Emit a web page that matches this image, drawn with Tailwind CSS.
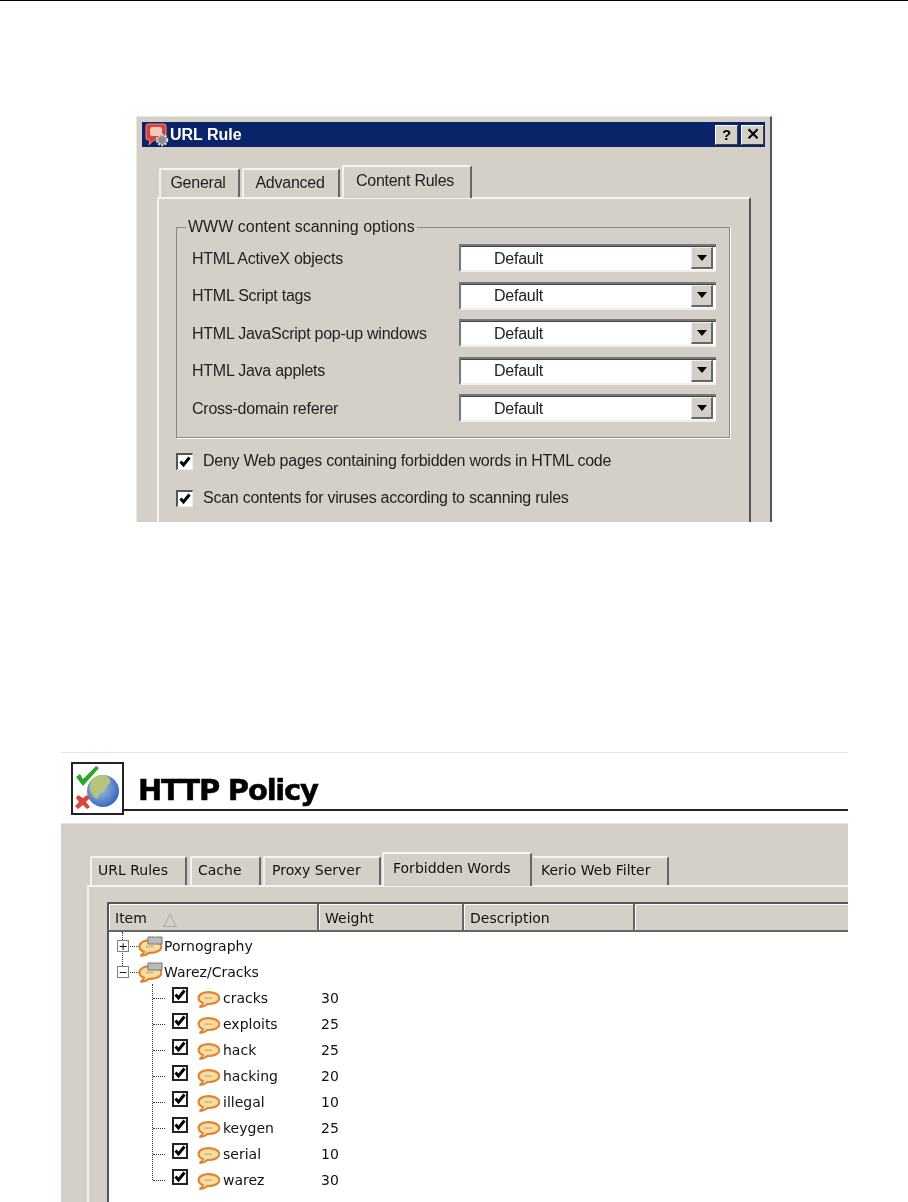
<!DOCTYPE html>
<html lang="en">
<head>
    <meta charset="UTF-8">
    <meta name="viewport" content="width=device-width, initial-scale=1.0">
    <title>URL Rule / HTTP Policy</title>
    <script src="https://cdn.jsdelivr.net/npm/@tailwindcss/browser@4"></script>
</head>
<body class="bg-white text-[#111] font-['Liberation_Sans',sans-serif]">
    <!-- shared icons -->
    <svg class="hidden">
        <symbol id="bubble" viewBox="0 0 24 18">
            <path d="M12 1.200C6 1.200 1.500 3.700 1.500 7.500c0 2.500 1.800 4.300 4.500 5.300-.3 1.500-1.500 3-3.500 4 3.500 0 6.500-1.200 8.500-3 7 .3 12.500-2.500 12.500-6.300C23.500 3.700 18 1.200 12 1.200z" fill="#f8dca2" stroke="#e0852f" stroke-width="2.200"/>
            <path d="M8 7.500h8" stroke="#b9a77a" stroke-width="2" stroke-dasharray="1.500 1"/>
        </symbol>
        <symbol id="check" viewBox="2 2 12 12">
            <path d="M3.500 7.500l3 3.500 6-7.500" fill="none" stroke="#000" stroke-width="3"/>
        </symbol>
        <symbol id="arrow" viewBox="0 0 10 6">
            <path d="M0 0h10L5 6z" fill="#000"/>
        </symbol>
    </svg>

    <div class="h-[1202px] w-[908px] overflow-hidden">
        <div class="h-px bg-black"></div>

        <!-- URL Rule dialog -->
        <div class="mt-[115px] ml-[136px] h-[406px] w-[636px] overflow-hidden border-t border-l border-r-2 border-t-[#ece9e2] border-l-[#ece9e2] border-r-[#555] bg-[#d4d0c8] text-[16px] tracking-[-0.25px] text-[#222] blur-[0.35px]">
            <div class="mx-[5px] mt-[5px] flex h-[25px] items-center bg-[#0a246a] pr-[1px] pl-[3px]">
                <svg class="h-[24px] w-[24px]" viewBox="0 0 24 24">
                    <path d="M3 1h16a2 2 0 0 1 2 2v12a2 2 0 0 1-2 2H9l-5 5 1-5H3a2 2 0 0 1-2-2V3a2 2 0 0 1 2-2z" fill="#d8423a" stroke="#f08a7c"/>
                    <rect x="5" y="4" width="12" height="9" rx="2" fill="#f6c9be"/>
                    <circle cx="17" cy="17" r="5" fill="#8d8d8d" stroke="#d8d8d8" stroke-width="2.500" stroke-dasharray="2 1.200"/>
                </svg>
                <span class="ml-[1px] text-[16px] font-bold tracking-normal text-white">URL Rule</span>
                <div class="ml-auto flex gap-[3px]">
                    <div class="flex h-[20px] w-[23px] items-center justify-center border border-t-white border-l-white border-r-[#404040] border-b-[#404040] bg-[#d4d0c8] text-[15px] leading-none font-bold text-black">?</div>
                    <div class="flex h-[20px] w-[23px] items-center justify-center border border-t-white border-l-white border-r-[#404040] border-b-[#404040] bg-[#d4d0c8] text-[17px] leading-none text-black [-webkit-text-stroke:0.4px_black]">✕</div>
                </div>
            </div>

            <div class="mt-[18px] ml-[20px] w-[594px]">
                <div class="relative z-10 flex items-end gap-[2px] pl-[2px]">
                    <div class="flex h-[29px] w-[81px] items-center justify-center rounded-t-[2px] border-t-2 border-l-2 border-r-2 border-t-[#f4f2ee] border-l-[#f4f2ee] border-r-[#666] pr-[3px] pb-[1px]">General</div>
                    <div class="flex h-[29px] w-[98px] items-center justify-center rounded-t-[2px] border-t-2 border-l-2 border-r-2 border-t-[#f4f2ee] border-l-[#f4f2ee] border-r-[#666] pr-[2px] pb-[1px]">Advanced</div>
                    <div class="-mb-px flex h-[33px] w-[130px] items-center justify-center rounded-t-[2px] border-t-2 border-l-2 border-r-2 border-t-[#f4f2ee] border-l-[#f4f2ee] border-r-[#666] bg-[#d4d0c8] pr-[4px] pb-[3px]">Content Rules</div>
                </div>
                <div class="h-[330px] border-t-2 border-l-2 border-r-2 border-t-[#f4f2ee] border-l-[#f4f2ee] border-r-[#555] pt-[28px] pl-[17px]">
                    <div class="relative h-[211px] w-[554px] border border-[#8a8880] pt-[16px] pl-[15px] shadow-[1px_1px_0_#fff]">
                        <span class="absolute -top-[11px] left-[9px] bg-[#d4d0c8] px-[2px] leading-[20px] tracking-normal">WWW content scanning options</span>
                        <div class="flex flex-col gap-[9.500px]">
                            <div class="flex h-[28px] items-center">
                                <span class="w-[267px] pt-[1px]">HTML ActiveX objects</span>
                                <div class="flex h-[28px] w-[257px] items-center border-t-2 border-l-2 border-t-[#777] border-l-[#777] border-b-2 border-b-[#f0eee8] bg-white pr-[3px] pl-[33px] shadow-[inset_0_1px_0_#444]">
                                    <span class="pt-[1px]">Default</span>
                                    <div class="ml-auto flex h-[22px] w-[22px] items-center justify-center border-t border-l border-r-2 border-b-2 border-t-[#f0eee8] border-l-[#f0eee8] border-r-[#666] border-b-[#666] bg-[#d4d0c8]"><svg class="h-[6px] w-[10px]"><use href="#arrow"/></svg></div>
                                </div>
                            </div>
                            <div class="flex h-[28px] items-center">
                                <span class="w-[267px] pt-[1px]">HTML Script tags</span>
                                <div class="flex h-[28px] w-[257px] items-center border-t-2 border-l-2 border-t-[#777] border-l-[#777] border-b-2 border-b-[#f0eee8] bg-white pr-[3px] pl-[33px] shadow-[inset_0_1px_0_#444]">
                                    <span class="pt-[1px]">Default</span>
                                    <div class="ml-auto flex h-[22px] w-[22px] items-center justify-center border-t border-l border-r-2 border-b-2 border-t-[#f0eee8] border-l-[#f0eee8] border-r-[#666] border-b-[#666] bg-[#d4d0c8]"><svg class="h-[6px] w-[10px]"><use href="#arrow"/></svg></div>
                                </div>
                            </div>
                            <div class="flex h-[28px] items-center">
                                <span class="w-[267px] pt-[1px]">HTML JavaScript pop-up windows</span>
                                <div class="flex h-[28px] w-[257px] items-center border-t-2 border-l-2 border-t-[#777] border-l-[#777] border-b-2 border-b-[#f0eee8] bg-white pr-[3px] pl-[33px] shadow-[inset_0_1px_0_#444]">
                                    <span class="pt-[1px]">Default</span>
                                    <div class="ml-auto flex h-[22px] w-[22px] items-center justify-center border-t border-l border-r-2 border-b-2 border-t-[#f0eee8] border-l-[#f0eee8] border-r-[#666] border-b-[#666] bg-[#d4d0c8]"><svg class="h-[6px] w-[10px]"><use href="#arrow"/></svg></div>
                                </div>
                            </div>
                            <div class="flex h-[28px] items-center">
                                <span class="w-[267px] pt-[1px]">HTML Java applets</span>
                                <div class="flex h-[28px] w-[257px] items-center border-t-2 border-l-2 border-t-[#777] border-l-[#777] border-b-2 border-b-[#f0eee8] bg-white pr-[3px] pl-[33px] shadow-[inset_0_1px_0_#444]">
                                    <span class="pt-[1px]">Default</span>
                                    <div class="ml-auto flex h-[22px] w-[22px] items-center justify-center border-t border-l border-r-2 border-b-2 border-t-[#f0eee8] border-l-[#f0eee8] border-r-[#666] border-b-[#666] bg-[#d4d0c8]"><svg class="h-[6px] w-[10px]"><use href="#arrow"/></svg></div>
                                </div>
                            </div>
                            <div class="flex h-[28px] items-center">
                                <span class="w-[267px] pt-[1px]">Cross-domain referer</span>
                                <div class="flex h-[28px] w-[257px] items-center border-t-2 border-l-2 border-t-[#777] border-l-[#777] border-b-2 border-b-[#f0eee8] bg-white pr-[3px] pl-[33px] shadow-[inset_0_1px_0_#444]">
                                    <span class="pt-[1px]">Default</span>
                                    <div class="ml-auto flex h-[22px] w-[22px] items-center justify-center border-t border-l border-r-2 border-b-2 border-t-[#f0eee8] border-l-[#f0eee8] border-r-[#666] border-b-[#666] bg-[#d4d0c8]"><svg class="h-[6px] w-[10px]"><use href="#arrow"/></svg></div>
                                </div>
                            </div>
                        </div>
                    </div>
                    <div class="mt-[14px] flex h-[18px] items-center gap-[10px]">
                        <div class="h-[17px] w-[17px] border-t-2 border-l-2 border-t-[#555] border-l-[#555] border-r border-b border-r-[#eee] border-b-[#eee] bg-white p-[1px]"><svg class="h-full w-full"><use href="#check"/></svg></div>
                        <span>Deny Web pages containing forbidden words in HTML code</span>
                    </div>
                    <div class="mt-[19px] flex h-[18px] items-center gap-[10px]">
                        <div class="h-[17px] w-[17px] border-t-2 border-l-2 border-t-[#555] border-l-[#555] border-r border-b border-r-[#eee] border-b-[#eee] bg-white p-[1px]"><svg class="h-full w-full"><use href="#check"/></svg></div>
                        <span>Scan contents for viruses according to scanning rules</span>
                    </div>
                </div>
            </div>
        </div>

        <!-- HTTP Policy -->
        <div class="mt-[230px] ml-[61px] w-[787px] font-['DejaVu_Sans',sans-serif] text-[14px] blur-[0.35px]">
            <div class="flex h-[71px] items-start border-t border-[#e8e4dc] pt-[9px] pl-[10px]">
                <div class="flex h-[53px] w-[53px] shrink-0 items-center justify-center border-2 border-[#222] bg-white">
                    <svg class="h-[48px] w-[48px]" viewBox="0 0 48 48">
                        <defs>
                            <radialGradient id="globe" cx="0.4" cy="0.4" r="0.7">
                                <stop offset="0" stop-color="#a8c8ee"/>
                                <stop offset="1" stop-color="#2a5cb4"/>
                            </radialGradient>
                        </defs>
                        <circle cx="29" cy="26" r="16" fill="url(#globe)"/>
                        <path d="M18 14c4-4 11-5 15-3 3 2 5 6 2 8-3 2-3 7-7 8-3 0-3 5-5 7-3-2-5-4-7-9-1-4 0-8 2-11z" fill="#b5c47a"/>
                        <path d="M2 12l4-3 3 5L22 1l3 2L9 21z" fill="#2aa62a"/>
                        <path d="M4 30l5 3 4-3 3 3-4 4 4 5-3 2-4-4-5 4-3-3 4-4-3-4z" fill="#d8453a"/>
                    </svg>
                </div>
                <div class="mt-[9px] flex h-[40px] flex-1 items-center border-b-2 border-[#222] pl-[14px]">
                    <h1 class="text-[29px] leading-none font-bold tracking-[-1.200px] text-black [-webkit-text-stroke:0.5px_black]">HTTP Policy</h1>
                </div>
            </div>

            <div class="h-[379px] border-t border-[#e8e4dc] bg-[#d4d0c8] pt-[28px]">
                <div class="relative z-10 flex items-end pl-[29px]">
                    <div class="flex h-[29px] w-[97px] items-center rounded-t-[2px] border-t-2 border-l-2 border-r-2 border-t-[#f4f2ee] border-l-[#f4f2ee] border-r-[#666] pb-[2px] pl-[6px]">URL Rules</div>
                    <div class="ml-[3px] flex h-[29px] w-[71px] items-center rounded-t-[2px] border-t-2 border-l-2 border-r-2 border-t-[#f4f2ee] border-l-[#f4f2ee] border-r-[#666] pb-[2px] pl-[6px]">Cache</div>
                    <div class="ml-[2px] flex h-[29px] w-[118px] items-center rounded-t-[2px] border-t-2 border-l-2 border-r-2 border-t-[#f4f2ee] border-l-[#f4f2ee] border-r-[#666] pb-[2px] pl-[7px]">Proxy Server</div>
                    <div class="-mb-px ml-px flex h-[34px] w-[150px] items-center rounded-t-[2px] border-t-2 border-l-2 border-r-2 border-t-[#f4f2ee] border-l-[#f4f2ee] border-r-[#666] bg-[#d4d0c8] pb-[3px] pl-[9px]">Forbidden Words</div>
                    <div class="flex h-[29px] w-[137px] items-center rounded-t-[2px] border-t-2 border-r-2 border-t-[#f4f2ee] border-r-[#666] pb-[2px] pl-[9px]">Kerio Web Filter</div>
                </div>
                <div class="ml-[26px] h-[320px] border-t-2 border-l-2 border-t-[#f4f2ee] border-l-[#f4f2ee] pt-[15px] pl-[18px]">
                    <div class="h-[310px] border-t-2 border-l-2 border-t-[#555] border-l-[#555] bg-white">
                        <div class="flex h-[28px] border-b-2 border-[#666] bg-[#d4d0c8]">
                            <div class="flex w-[210px] items-center border-r-2 border-r-[#666] pt-[3px] pl-[6px] shadow-[inset_1px_1px_0_#fff]">Item<span class="ml-[16px] text-[18px] leading-none text-[#aaa]">△</span></div>
                            <div class="flex w-[145px] items-center border-r-2 border-r-[#666] pt-[3px] pl-[6px] shadow-[inset_1px_1px_0_#fff]">Weight</div>
                            <div class="flex w-[171px] items-center border-r-2 border-r-[#666] pt-[3px] pl-[6px] shadow-[inset_1px_1px_0_#fff]">Description</div>
                            <div class="flex-1 shadow-[inset_1px_1px_0_#fff]"></div>
                        </div>

                        <div class="relative pt-[1px]">
                            <!-- tree connector lines -->
                            <div class="absolute top-0 left-[13px] h-[38px] border-l border-dotted border-[#333]"></div>
                            <div class="absolute top-[52px] left-[43px] h-[196px] border-l border-dotted border-[#333]"></div>

                            <div class="relative flex h-[26px] items-center pl-[8px]">
                                <div class="flex h-[12px] w-[12px] items-center justify-center border border-[#808080] bg-white text-[11px] leading-none text-black">+</div>
                                <div class="ml-[1px] w-[9px] border-t border-dotted border-[#333]"></div>
                                <svg class="-ml-[1px] h-[21px] w-[25px]" viewBox="0 0 25 21"><use href="#bubble" y="3" width="24" height="18"/><path d="M10 1h6l1 .600 1-.600h6v7H10z" fill="#bbb" stroke="#777"/></svg>
                                <span class="ml-[1px]">Pornography</span>
                            </div>
                            <div class="relative flex h-[26px] items-center pl-[8px]">
                                <div class="flex h-[12px] w-[12px] items-center justify-center border border-[#808080] bg-white text-[11px] leading-none text-black">−</div>
                                <div class="ml-[1px] w-[9px] border-t border-dotted border-[#333]"></div>
                                <svg class="-ml-[1px] h-[21px] w-[25px]" viewBox="0 0 25 21"><use href="#bubble" y="3" width="24" height="18"/><path d="M10 1h6l1 .600 1-.600h6v7H10z" fill="#bbb" stroke="#777"/></svg>
                                <span class="ml-[1px]">Warez/Cracks</span>
                            </div>

                            <div class="relative flex h-[26px] items-center pl-[44px]">
                                <div class="w-[12px] border-t border-dotted border-[#333]"></div>
                                <div class="mb-[6px] ml-[7px] h-[16px] w-[16px] border-2 border-[#222] bg-white"><svg class="h-full w-full"><use href="#check"/></svg></div>
                                <svg class="mt-[3px] ml-[9px] h-[17px] w-[23px]"><use href="#bubble"/></svg>
                                <span class="ml-[3px] w-[98px]">cracks</span>
                                <span>30</span>
                            </div>
                            <div class="relative flex h-[26px] items-center pl-[44px]">
                                <div class="w-[12px] border-t border-dotted border-[#333]"></div>
                                <div class="mb-[6px] ml-[7px] h-[16px] w-[16px] border-2 border-[#222] bg-white"><svg class="h-full w-full"><use href="#check"/></svg></div>
                                <svg class="mt-[3px] ml-[9px] h-[17px] w-[23px]"><use href="#bubble"/></svg>
                                <span class="ml-[3px] w-[98px]">exploits</span>
                                <span>25</span>
                            </div>
                            <div class="relative flex h-[26px] items-center pl-[44px]">
                                <div class="w-[12px] border-t border-dotted border-[#333]"></div>
                                <div class="mb-[6px] ml-[7px] h-[16px] w-[16px] border-2 border-[#222] bg-white"><svg class="h-full w-full"><use href="#check"/></svg></div>
                                <svg class="mt-[3px] ml-[9px] h-[17px] w-[23px]"><use href="#bubble"/></svg>
                                <span class="ml-[3px] w-[98px]">hack</span>
                                <span>25</span>
                            </div>
                            <div class="relative flex h-[26px] items-center pl-[44px]">
                                <div class="w-[12px] border-t border-dotted border-[#333]"></div>
                                <div class="mb-[6px] ml-[7px] h-[16px] w-[16px] border-2 border-[#222] bg-white"><svg class="h-full w-full"><use href="#check"/></svg></div>
                                <svg class="mt-[3px] ml-[9px] h-[17px] w-[23px]"><use href="#bubble"/></svg>
                                <span class="ml-[3px] w-[98px]">hacking</span>
                                <span>20</span>
                            </div>
                            <div class="relative flex h-[26px] items-center pl-[44px]">
                                <div class="w-[12px] border-t border-dotted border-[#333]"></div>
                                <div class="mb-[6px] ml-[7px] h-[16px] w-[16px] border-2 border-[#222] bg-white"><svg class="h-full w-full"><use href="#check"/></svg></div>
                                <svg class="mt-[3px] ml-[9px] h-[17px] w-[23px]"><use href="#bubble"/></svg>
                                <span class="ml-[3px] w-[98px]">illegal</span>
                                <span>10</span>
                            </div>
                            <div class="relative flex h-[26px] items-center pl-[44px]">
                                <div class="w-[12px] border-t border-dotted border-[#333]"></div>
                                <div class="mb-[6px] ml-[7px] h-[16px] w-[16px] border-2 border-[#222] bg-white"><svg class="h-full w-full"><use href="#check"/></svg></div>
                                <svg class="mt-[3px] ml-[9px] h-[17px] w-[23px]"><use href="#bubble"/></svg>
                                <span class="ml-[3px] w-[98px]">keygen</span>
                                <span>25</span>
                            </div>
                            <div class="relative flex h-[26px] items-center pl-[44px]">
                                <div class="w-[12px] border-t border-dotted border-[#333]"></div>
                                <div class="mb-[6px] ml-[7px] h-[16px] w-[16px] border-2 border-[#222] bg-white"><svg class="h-full w-full"><use href="#check"/></svg></div>
                                <svg class="mt-[3px] ml-[9px] h-[17px] w-[23px]"><use href="#bubble"/></svg>
                                <span class="ml-[3px] w-[98px]">serial</span>
                                <span>10</span>
                            </div>
                            <div class="relative flex h-[26px] items-center pl-[44px]">
                                <div class="w-[12px] border-t border-dotted border-[#333]"></div>
                                <div class="mb-[6px] ml-[7px] h-[16px] w-[16px] border-2 border-[#222] bg-white"><svg class="h-full w-full"><use href="#check"/></svg></div>
                                <svg class="mt-[3px] ml-[9px] h-[17px] w-[23px]"><use href="#bubble"/></svg>
                                <span class="ml-[3px] w-[98px]">warez</span>
                                <span>30</span>
                            </div>
                        </div>
                    </div>
                </div>
            </div>
        </div>
    </div>
</body>
</html>
